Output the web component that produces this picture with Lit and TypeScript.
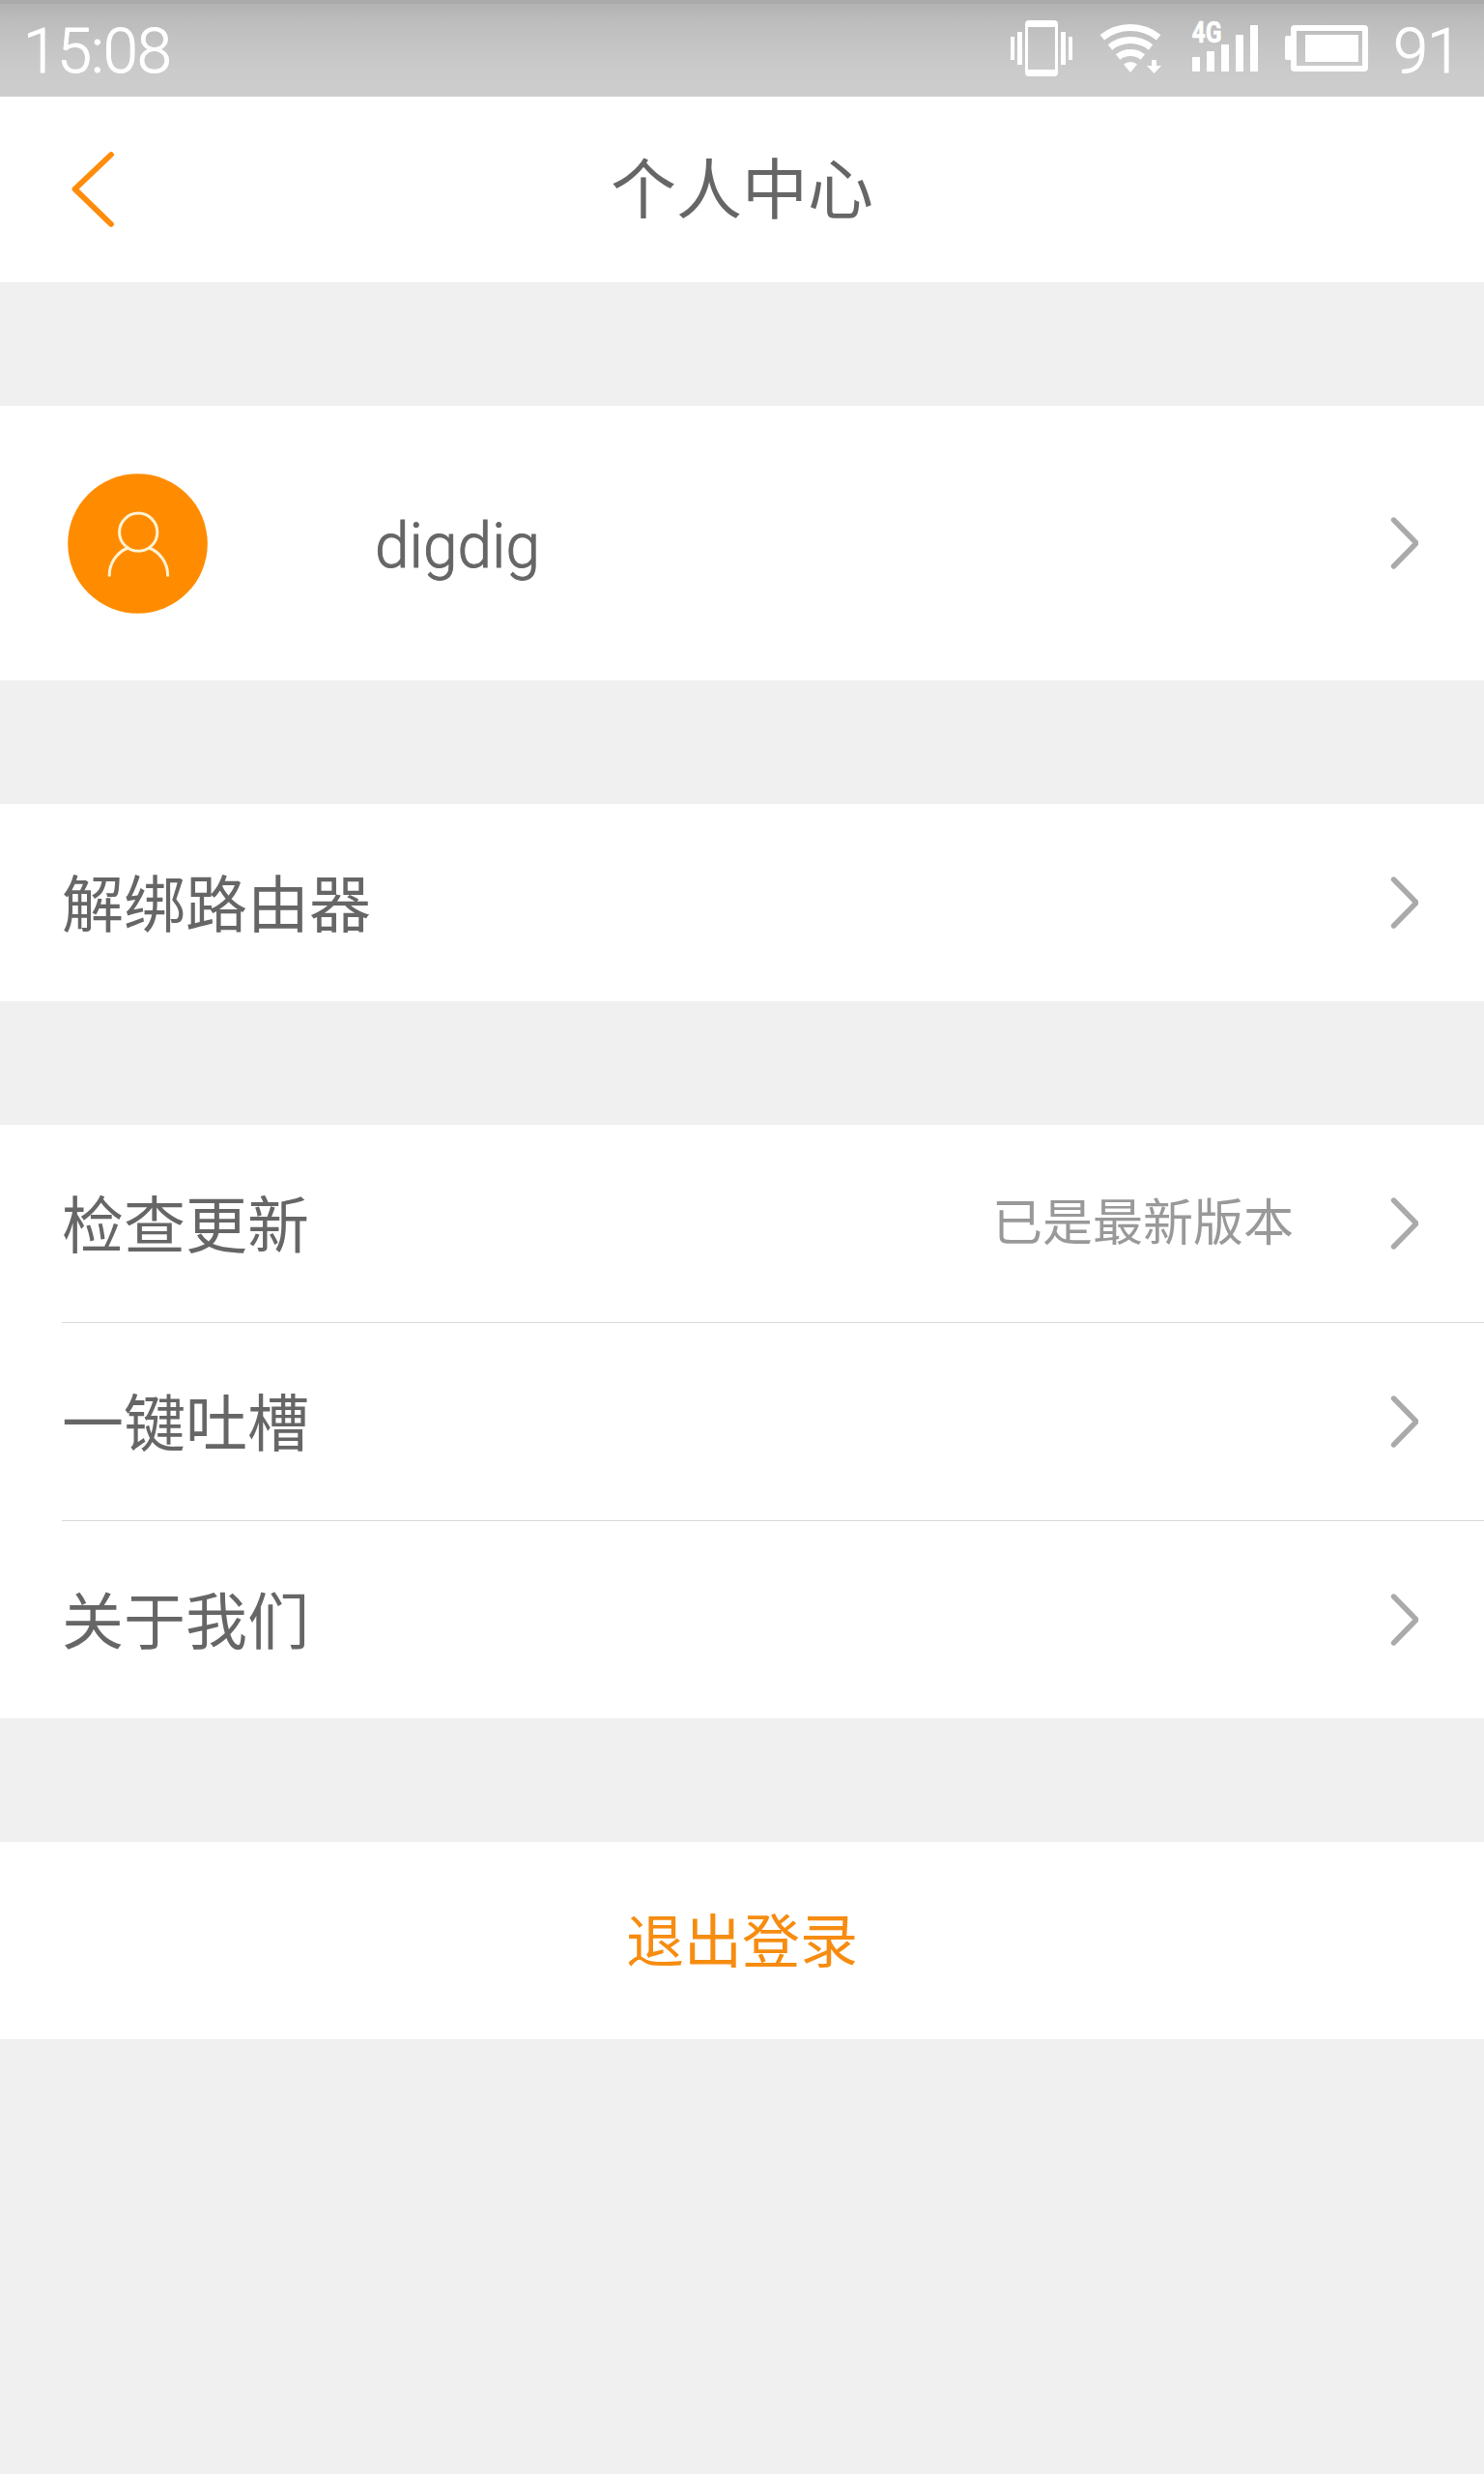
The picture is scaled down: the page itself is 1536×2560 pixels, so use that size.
import { LitElement, html, svg, css, nothing } from "lit";
import { customElement, property } from "lit/decorators.js";

@customElement("status-bar")
class StatusBar extends LitElement {
  static styles = css`
    :host {
      display: flex;
      align-items: center;
      justify-content: space-between;
      box-sizing: border-box;
      height: 100px;
      padding: 2px 24px 0 24px;
      border-top: 4px solid #aaaaaa;
      background: linear-gradient(#b3b3b3 0, #bdbdbd 20px, #c5c5c5 44px, #cbcbcb 70px, #cdcdcd 96px);
      color: #fff;
      font: 300 65px/1 Roboto, sans-serif;
    }
    .time {
      letter-spacing: -1px;
      -webkit-text-stroke: 0.9px #fff;
    }
    .level {
      margin-left: 2px;
      letter-spacing: -1px;
      -webkit-text-stroke: 0.9px #fff;
    }
    .right {
      display: flex;
      align-items: center;
    }
    .icons {
      display: block;
      margin-top: -6px;
      fill: #fff;
    }
    .line {
      fill: none;
      stroke: #fff;
    }
    .net {
      font: 700 31px Roboto, sans-serif;
      stroke: #fff;
      stroke-width: 0.6;
    }
  `;

  // Arc of the wifi fan with the given centre-line radius, around (130, 75).
  private arc(r: number) {
    const dx = r * 0.628;
    const y = 75 - r * 0.778;
    return svg`<path class="line" stroke-width="7" d="M${130 - dx} ${y}A${r} ${r} 0 0 1 ${130 + dx} ${y}"/>`;
  }

  render() {
    return html`
      <span class="time">15:08</span>
      <div class="right">
        <svg class="icons" width="400" height="100" viewBox="0 0 400 100">
          <path d="M6 38h4v24h-4zM13 33h5v34h-5zM58 33h5v34h-5zM66 38h4v24h-4z" />
          <path fill-rule="evenodd" d="M25 21h26a4 4 0 0 1 4 4v50a4 4 0 0 1-4 4h-26a4 4 0 0 1-4-4v-50a4 4 0 0 1 4-4zM24 28v44h28v-44z" />
          ${[46.5, 33.5, 20.5].map((r) => this.arc(r))}
          <path d="M130 75L123 66.4A11 11 0 0 1 137 66.4z" />
          <path d="M152 62h5v6h5l-7.500 8l-7.500-8h5z" />
          <text class="net" x="193.500" y="44" textLength="31" lengthAdjust="spacingAndGlyphs">4G</text>
          <path d="M194 59h8v15h-8zM209 53h8v21h-8zM224 46h8v28h-8zM239 36h8v38h-8zM254 26h8v48h-8z" />
          <path d="M296 37h-4a2 2 0 0 0-2 2v21a2 2 0 0 0 2 2h4z" />
          <rect class="line" x="299" y="29" width="74" height="42" stroke-width="6" rx="1" />
          <rect x="311" y="36" width="55" height="28" />
        </svg>
        <span class="level">91</span>
      </div>
    `;
  }
}

@customElement("list-row")
class ListRow extends LitElement {
  static styles = css`
    :host {
      display: flex;
      align-items: center;
      box-sizing: border-box;
      height: 204px;
      padding: 0 68px 0 64px;
      background: #fff;
      color: #666;
      font: 64px/1 "Noto Sans CJK SC", sans-serif;
    }
    :host([tall]) {
      height: 284px;
      padding-left: 70px;
      font-family: Roboto, sans-serif;
      font-weight: 300;
    }
    .label {
      flex: 1;
      padding-bottom: 6px;
      white-space: nowrap;
    }
    :host([tall]) .label {
      padding: 7px 0 0 1px;
      -webkit-text-stroke: 1px #666;
    }
    .note {
      margin-right: 99px;
      padding-bottom: 9px;
      color: #999;
      font-size: 52px;
      white-space: nowrap;
    }
    .chevron {
      display: block;
      margin-bottom: 1px;
      fill: none;
      stroke: #aaa;
      stroke-width: 5.4;
      stroke-linecap: round;
      stroke-linejoin: round;
    }
  `;

  @property() label = "";
  @property() note = "";

  render() {
    return html`
      <slot></slot>
      <span class="label">${this.label}</span>
      ${this.note ? html`<span class="note">${this.note}</span>` : nothing}
      <svg class="chevron" width="30" height="56" viewBox="0 0 30 56">
        <path d="M4.500 4L28 28L4.500 52" />
      </svg>
    `;
  }
}

@customElement("app-root")
class AppRoot extends LitElement {
  static styles = css`
    :host {
      display: flex;
      flex-direction: column;
      gap: 128px;
      min-height: 2560px;
      background: #f0f0f0;
      font-family: "Noto Sans CJK SC", sans-serif;
    }
    .header {
      display: grid;
      grid-template-columns: 200px 1fr 200px;
      align-items: center;
      height: 192px;
      background: #fff;
      color: #666;
    }
    .title {
      padding-bottom: 8px;
      text-align: center;
      font-size: 68px;
      line-height: 1;
    }
    .back {
      display: block;
      margin-left: 72px;
      fill: none;
      stroke: #ff8c0a;
      stroke-width: 5.8;
      stroke-linecap: round;
      stroke-linejoin: round;
    }
    .avatar {
      display: block;
      margin-right: 171px;
    }
    .disc {
      fill: #ff8c00;
    }
    .person {
      fill: none;
      stroke: #fff3d6;
      stroke-width: 3;
      stroke-linecap: round;
    }
    .group {
      display: flex;
      flex-direction: column;
      background: #fff;
    }
    .divider {
      height: 1px;
      margin-left: 64px;
      background: #d9d9d9;
    }
    .logout {
      display: flex;
      align-items: center;
      justify-content: center;
      box-sizing: border-box;
      height: 204px;
      padding-bottom: 6px;
      background: #fff;
      color: #f68c10;
      font-size: 60px;
      line-height: 1;
    }
  `;

  render() {
    return html`
      <div>
        <status-bar></status-bar>
        <div class="header">
          <svg class="back" width="48" height="80" viewBox="0 0 48 80">
            <path d="M43 4L5.500 39.700L43 76" />
          </svg>
          <div class="title">个人中心</div>
        </div>
      </div>
      <list-row tall label="digdig">
        <svg class="avatar" width="146" height="146" viewBox="0 0 146 146">
          <circle class="disc" cx="72.500" cy="73.500" r="72.300" />
          <circle class="person" cx="73.200" cy="61.700" r="19.600" />
          <path class="person" d="M43.200 106.200A30.200 30.200 0 0 1 62.500 78M84.300 78A30.200 30.200 0 0 1 103.600 106.200" />
        </svg>
      </list-row>
      <list-row label="解绑路由器"></list-row>
      <div class="group">
        <list-row label="检查更新" note="已是最新版本"></list-row>
        <div class="divider"></div>
        <list-row label="一键吐槽"></list-row>
        <div class="divider"></div>
        <list-row label="关于我们"></list-row>
      </div>
      <div class="logout">退出登录</div>
    `;
  }
}
